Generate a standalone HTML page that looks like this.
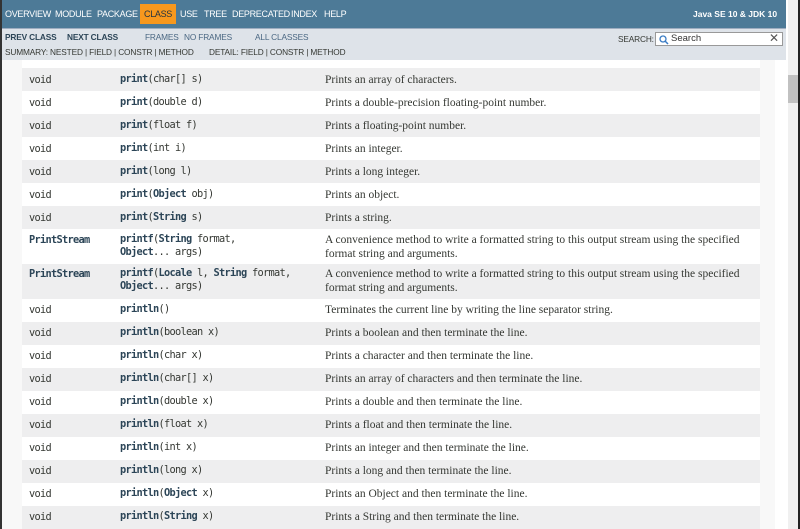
<!DOCTYPE html>
<html><head><style>
*{margin:0;padding:0;box-sizing:border-box}
body{width:800px;height:529px;overflow:hidden;background:#f8f8f8;font-family:"Liberation Sans","DejaVu Sans",sans-serif;position:relative}
span{white-space:nowrap}
.lb{position:absolute;left:0;top:0;width:2px;height:529px;background:#333;z-index:5}
.top{position:absolute;left:0;top:0;width:786px;height:29px;background:#4d7a97;border-bottom:1px solid #9eadc0;color:#fff;font-size:9px;letter-spacing:-0.3px}
.top span{position:absolute;top:9px}
.cls{background:#f8981d;padding:5px 4px;top:4px!important;color:#253441}
.sub{position:absolute;left:0;top:29px;width:786px;height:31px;background:#dee3e9;color:#4a6782;font-size:8.3px;letter-spacing:-0.15px}
.sub span{position:absolute}
.b{font-weight:bold;color:#2c4557}
.sb{position:absolute;left:655px;top:32px;width:128px;height:14px;background:#fff;border:1px solid #999;font-size:9.5px;color:#333}
.rowc{position:absolute;left:22px;width:738px}
.g{background:#eeeeef}.w{background:#fff}
.t,.m,.d{position:absolute}
.t,.m{font-family:"DejaVu Sans Mono","Liberation Mono",monospace;font-size:10.3px;letter-spacing:-0.7px;color:#353833}
.t{left:7px}
.m{left:98px;line-height:12.5px}
.m b,.t b{color:#2c4557}
.d{left:303px;font-family:"Liberation Serif","DejaVu Serif",serif;font-size:11.5px;color:#353833;line-height:14px}
.sc{position:absolute;left:788px;top:0;width:10px;height:529px;background:#f0f0f0}
.wh{position:absolute;left:775px;top:0;width:13px;height:529px;background:#fff}
.rb{position:absolute;left:798px;top:0;width:2px;height:529px;background:#222}
</style></head><body>
<div class="lb"></div>
<div class="wh"></div><div class="sc"><div style="position:absolute;top:75px;left:0;width:10px;height:28px;background:#c1c1c1"></div></div><div class="rb"></div>
<div class="rowc w" style="top:60px;height:8px"></div>
<div class="rowc g" style="top:68px;height:23px"><span class="t" style="top:6px">void</span><span class="m" style="top:5px"><b>print</b>(char[] s)</span><span class="d" style="top:5px">Prints an array of characters.</span></div>
<div class="rowc w" style="top:91px;height:23px"><span class="t" style="top:6px">void</span><span class="m" style="top:5px"><b>print</b>(double d)</span><span class="d" style="top:5px">Prints a double-precision floating-point number.</span></div>
<div class="rowc g" style="top:114px;height:23px"><span class="t" style="top:6px">void</span><span class="m" style="top:5px"><b>print</b>(float f)</span><span class="d" style="top:5px">Prints a floating-point number.</span></div>
<div class="rowc w" style="top:137px;height:23px"><span class="t" style="top:6px">void</span><span class="m" style="top:5px"><b>print</b>(int i)</span><span class="d" style="top:5px">Prints an integer.</span></div>
<div class="rowc g" style="top:160px;height:23px"><span class="t" style="top:6px">void</span><span class="m" style="top:5px"><b>print</b>(long l)</span><span class="d" style="top:5px">Prints a long integer.</span></div>
<div class="rowc w" style="top:183px;height:23px"><span class="t" style="top:6px">void</span><span class="m" style="top:5px"><b>print</b>(<b>Object</b> obj)</span><span class="d" style="top:5px">Prints an object.</span></div>
<div class="rowc g" style="top:206px;height:23px"><span class="t" style="top:6px">void</span><span class="m" style="top:5px"><b>print</b>(<b>String</b> s)</span><span class="d" style="top:5px">Prints a string.</span></div>
<div class="rowc w" style="top:229px;height:35px"><span class="t" style="top:5px"><b>PrintStream</b></span><span class="m" style="top:4px"><b>printf</b>(<b>String</b> format,<br><b>Object</b>... args)</span><span class="d" style="top:4px">A convenience method to write a formatted string to this output stream using the specified<br>format string and arguments.</span></div>
<div class="rowc g" style="top:264px;height:35px"><span class="t" style="top:4px"><b>PrintStream</b></span><span class="m" style="top:3px"><b>printf</b>(<b>Locale</b> l, <b>String</b> format,<br><b>Object</b>... args)</span><span class="d" style="top:3px">A convenience method to write a formatted string to this output stream using the specified<br>format string and arguments.</span></div>
<div class="rowc w" style="top:299px;height:23px"><span class="t" style="top:5px">void</span><span class="m" style="top:4px"><b>println</b>()</span><span class="d" style="top:4px">Terminates the current line by writing the line separator string.</span></div>
<div class="rowc g" style="top:322px;height:23px"><span class="t" style="top:5px">void</span><span class="m" style="top:4px"><b>println</b>(boolean x)</span><span class="d" style="top:4px">Prints a boolean and then terminate the line.</span></div>
<div class="rowc w" style="top:345px;height:23px"><span class="t" style="top:5px">void</span><span class="m" style="top:4px"><b>println</b>(char x)</span><span class="d" style="top:4px">Prints a character and then terminate the line.</span></div>
<div class="rowc g" style="top:368px;height:23px"><span class="t" style="top:5px">void</span><span class="m" style="top:4px"><b>println</b>(char[] x)</span><span class="d" style="top:4px">Prints an array of characters and then terminate the line.</span></div>
<div class="rowc w" style="top:391px;height:23px"><span class="t" style="top:5px">void</span><span class="m" style="top:4px"><b>println</b>(double x)</span><span class="d" style="top:4px">Prints a double and then terminate the line.</span></div>
<div class="rowc g" style="top:414px;height:23px"><span class="t" style="top:5px">void</span><span class="m" style="top:4px"><b>println</b>(float x)</span><span class="d" style="top:4px">Prints a float and then terminate the line.</span></div>
<div class="rowc w" style="top:437px;height:23px"><span class="t" style="top:5px">void</span><span class="m" style="top:4px"><b>println</b>(int x)</span><span class="d" style="top:4px">Prints an integer and then terminate the line.</span></div>
<div class="rowc g" style="top:460px;height:23px"><span class="t" style="top:5px">void</span><span class="m" style="top:4px"><b>println</b>(long x)</span><span class="d" style="top:4px">Prints a long and then terminate the line.</span></div>
<div class="rowc w" style="top:483px;height:23px"><span class="t" style="top:5px">void</span><span class="m" style="top:4px"><b>println</b>(<b>Object</b> x)</span><span class="d" style="top:4px">Prints an Object and then terminate the line.</span></div>
<div class="rowc g" style="top:506px;height:23px"><span class="t" style="top:5px">void</span><span class="m" style="top:4px"><b>println</b>(<b>String</b> x)</span><span class="d" style="top:4px">Prints a String and then terminate the line.</span></div>

<div class="top">
<span style="left:5px">OVERVIEW</span><span style="left:55px">MODULE</span><span style="left:97px">PACKAGE</span>
<span class="cls" style="left:140px">CLASS</span><span style="left:180px">USE</span><span style="left:204px">TREE</span><span style="left:232px">DEPRECATED</span><span style="left:291px">INDEX</span><span style="left:324px">HELP</span>
<span style="left:693px;font-weight:bold;font-size:8.5px;letter-spacing:0">Java SE 10 &amp; JDK 10</span>
</div>
<div class="sub">
<span class="b" style="left:5px;top:3px">PREV CLASS</span><span class="b" style="left:67px;top:3px">NEXT CLASS</span>
<span style="left:145px;top:3px">FRAMES</span><span style="left:184px;top:3px">NO FRAMES</span><span style="left:255px;top:3px">ALL CLASSES</span>
<span style="left:5px;top:18px;color:#353833">SUMMARY: NESTED | FIELD | CONSTR | METHOD</span>
<span style="left:209px;top:18px;color:#353833">DETAIL: FIELD | CONSTR | METHOD</span>
<span style="left:618px;top:5px;color:#353833">SEARCH:</span>
</div>
<div class="sb"><svg width="12" height="12" style="position:absolute;left:2px;top:1px"><circle cx="5" cy="5" r="3" fill="none" stroke="#3a7cc4" stroke-width="1.3"/><line x1="7" y1="7" x2="10" y2="10" stroke="#3a7cc4" stroke-width="1.5"/></svg><span style="position:absolute;left:15px;top:0">Search</span><span style="position:absolute;right:3px;top:-2px;font-size:12px;color:#555">✕</span></div>
</body></html>
